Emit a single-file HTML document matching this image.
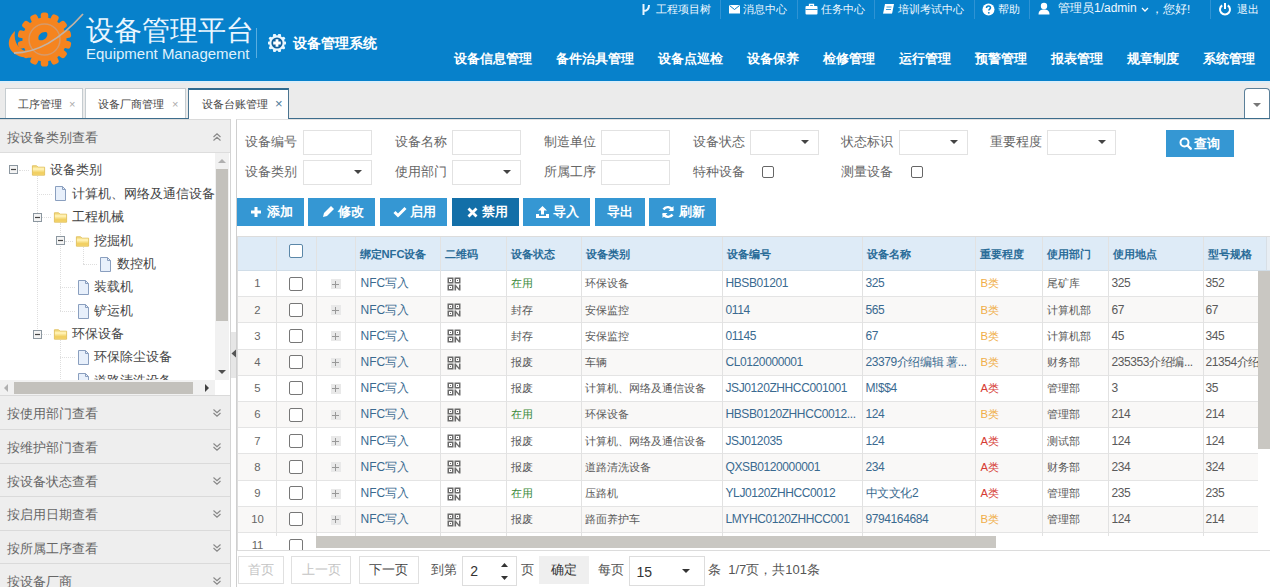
<!DOCTYPE html>
<html><head><meta charset="utf-8">
<style>
*{box-sizing:border-box;margin:0;padding:0}
html,body{width:1270px;height:587px;overflow:hidden;background:#fff;font-family:"Liberation Sans",sans-serif;color:#333;position:relative}
.abs{position:absolute}
#hdr{position:absolute;left:0;top:0;width:1270px;height:81px;background:#0781cb}
.logo-t{position:absolute;left:86px;top:14px;font-size:28px;color:#eaf6ff;white-space:nowrap;line-height:34px}
.logo-e{position:absolute;left:86px;top:45px;font-size:15px;color:#dff1fd;white-space:nowrap;line-height:17px}
.vsep{position:absolute;left:256px;top:28px;width:1px;height:30px;background:#5aaee0}
.sys{position:absolute;left:293px;top:35px;font-size:14px;font-weight:bold;color:#fff;white-space:nowrap;line-height:16px}
.tl{position:absolute;top:2px;font-size:11px;color:#eef8ff;white-space:nowrap;line-height:14px}
.tsep{position:absolute;top:0;width:1px;height:19px;background:#2f93d4}
.nav{position:absolute;top:51px;font-size:13px;font-weight:bold;color:#fff;white-space:nowrap;line-height:16px}
#tabs{position:absolute;left:0;top:81px;width:1270px;height:38px;background:#ebebeb;border-top:2px solid #dcedf8}
#tabs .line{position:absolute;left:0;top:35px;width:1270px;height:1px;background:#3d6d8c;z-index:1}
.tab{position:absolute;top:5px;height:30px;background:#fff;border:1px solid #c5ccd0;border-bottom:none;font-size:11px;color:#444;line-height:28px;white-space:nowrap}
.tab .x{position:absolute;font-size:11px;color:#aaa}
.tab.act{border:1px solid #4a7490;border-top:2px solid #2f6a90;border-bottom:none;height:31px;z-index:2}
.acc{position:absolute;left:0;width:230px;height:34px;background:#eeeeee;border-top:1px solid #dadada;font-size:13px;color:#666;line-height:35px;padding-left:7px;white-space:nowrap}
.chev{position:absolute;left:212px;top:12px;opacity:0.85}
.tt{position:absolute;font-size:13px;color:#444;white-space:nowrap;line-height:16px}
.lbl{position:absolute;font-size:13px;color:#666;white-space:nowrap;line-height:16px}
.inp{position:absolute;width:69px;height:25px;border:1px solid #e2e2e2;background:#fff}
.car{position:absolute;width:0;height:0;border-left:4px solid transparent;border-right:4px solid transparent;border-top:4px solid #444}
.cb{position:absolute;width:12px;height:12px;border:1.3px solid #666;border-radius:2px;background:#fff}
.btn{position:absolute;background:#3597d3;color:#fff;font-size:13px;font-weight:bold;white-space:nowrap}
.th{position:absolute;font-size:11.2px;font-weight:bold;color:#2a6c98;white-space:nowrap;line-height:16px}
.td{position:absolute;font-size:11.3px;color:#5a5a5a;white-space:nowrap;line-height:16px}
.td.num{text-align:center;color:#666}
.td.lnk{color:#3a6a90}
.nm{letter-spacing:-0.4px;font-size:12px;margin-left:-1.5px}
.td.lnk{font-size:12px}
.cbh{position:absolute;width:14px;height:14px;border:1.6px solid #5b87a8;border-radius:2px;background:#fff}
.cbr{position:absolute;width:14px;height:14px;border:1.6px solid #777;border-radius:2px;background:#fff}
.plus{position:absolute;width:10px;height:10px;background:#e9e9e9}
.plus:before{content:"";position:absolute;left:4.5px;top:1.5px;width:1px;height:7px;background:#999}
.plus:after{content:"";position:absolute;left:1.5px;top:4.5px;width:7px;height:1px;background:#999}
.pb{position:absolute;height:28px;border:1px solid #e0e0e0;font-size:13px;line-height:26px;text-align:center;white-space:nowrap}
.tl1{width:0;border-left:1px dotted #dedede}
.th1{height:0;border-top:1px dotted #dedede}
</style></head><body>
<div id="hdr">
  <svg class="abs" style="left:0;top:0" width="90" height="80" viewBox="0 0 90 80">
<g fill="#f5841f">
<circle cx="44.5" cy="39.5" r="22"/>
<rect x="40.75" y="12.50" width="7.5" height="9" rx="2.8" transform="rotate(0.0 44.50 39.50)"/><rect x="40.75" y="12.50" width="7.5" height="9" rx="2.8" transform="rotate(25.7 44.50 39.50)"/><rect x="40.75" y="12.50" width="7.5" height="9" rx="2.8" transform="rotate(51.4 44.50 39.50)"/><rect x="40.75" y="12.50" width="7.5" height="9" rx="2.8" transform="rotate(77.1 44.50 39.50)"/><rect x="40.75" y="12.50" width="7.5" height="9" rx="2.8" transform="rotate(102.9 44.50 39.50)"/><rect x="40.75" y="12.50" width="7.5" height="9" rx="2.8" transform="rotate(128.6 44.50 39.50)"/><rect x="40.75" y="12.50" width="7.5" height="9" rx="2.8" transform="rotate(154.3 44.50 39.50)"/><rect x="40.75" y="12.50" width="7.5" height="9" rx="2.8" transform="rotate(180.0 44.50 39.50)"/><rect x="40.75" y="12.50" width="7.5" height="9" rx="2.8" transform="rotate(205.7 44.50 39.50)"/><rect x="40.75" y="12.50" width="7.5" height="9" rx="2.8" transform="rotate(231.4 44.50 39.50)"/><rect x="40.75" y="12.50" width="7.5" height="9" rx="2.8" transform="rotate(257.1 44.50 39.50)"/><rect x="40.75" y="12.50" width="7.5" height="9" rx="2.8" transform="rotate(282.9 44.50 39.50)"/><rect x="40.75" y="12.50" width="7.5" height="9" rx="2.8" transform="rotate(308.6 44.50 39.50)"/><rect x="40.75" y="12.50" width="7.5" height="9" rx="2.8" transform="rotate(334.3 44.50 39.50)"/>
<path d="M15 31 C5 40 7 53 22 57 C31 59 39 57 45 54 C34 54 22 52 18 46 C15 42 14 37 15 31z"/>
</g>
<circle cx="44.5" cy="39.5" r="15.5" fill="none" stroke="#d69a6a" stroke-width="1.4"/>
<path d="M38.5 39.5 C37.5 35 41.5 31.5 46 32 C48.5 33 47.5 37.5 44 39.5 C42 40.5 40 40.8 38.5 39.5z" fill="#0781cb"/>
<path d="M14 53 C34 53 58 42 83 14" fill="none" stroke="#c2b3a6" stroke-width="1.8"/>
</svg>
  <div class="logo-t">设备管理平台</div>
  <div class="logo-e">Equipment Management</div>
  <div class="vsep"></div>
  <svg class="abs" style="left:268px;top:33.5px" width="18" height="18" viewBox="0 0 18 18"><g fill="#e8f7ff"><circle cx="9" cy="9" r="7.8"/><circle cx="17.00" cy="9.00" r="1.6"/><circle cx="15.47" cy="13.70" r="1.6"/><circle cx="11.47" cy="16.61" r="1.6"/><circle cx="6.53" cy="16.61" r="1.6"/><circle cx="2.53" cy="13.70" r="1.6"/><circle cx="1.00" cy="9.00" r="1.6"/><circle cx="2.53" cy="4.30" r="1.6"/><circle cx="6.53" cy="1.39" r="1.6"/><circle cx="11.47" cy="1.39" r="1.6"/><circle cx="15.47" cy="4.30" r="1.6"/></g><circle cx="9" cy="9" r="5.6" fill="#0d5f9c"/><path d="M9 5.2v7.6M5.2 9h7.6" stroke="#fff" stroke-width="2.8"/></svg>
  <div class="sys">设备管理系统</div>


  <svg class="abs" style="left:641px;top:3px" width="10" height="13" viewBox="0 0 10 13"><path d="M2.5 1v11M2.5 8C6 8 8 6 8 2" fill="none" stroke="#eaf6ff" stroke-width="2"/></svg>
  <svg class="abs" style="left:729px;top:4px" width="11" height="10" viewBox="0 0 11 10"><rect x="0" y="1" width="11" height="8.5" fill="#fff"/><path d="M0.5 1.5L5.5 5.5L10.5 1.5" fill="none" stroke="#0781cb" stroke-width="1"/></svg>
  <svg class="abs" style="left:805px;top:3px" width="13" height="12" viewBox="0 0 13 12"><path d="M4.5 3V1.5h4V3" fill="none" stroke="#fff" stroke-width="1.3"/><rect x="0.5" y="3" width="12" height="8.5" rx="1" fill="#fff"/><path d="M0.5 6.5h12" stroke="#0781cb" stroke-width="0.8"/></svg>
  <svg class="abs" style="left:882px;top:3px" width="13" height="13" viewBox="0 0 13 13"><path d="M3 1h9l-2 10H1z" fill="#fff"/><path d="M1 11h9l1.5-1" fill="none" stroke="#0781cb" stroke-width="0.8"/><path d="M4.5 4h5M4 6.5h5" stroke="#0781cb" stroke-width="0.8"/></svg>
  <svg class="abs" style="left:982px;top:3px" width="13" height="13" viewBox="0 0 13 13"><circle cx="6.5" cy="6.5" r="6" fill="#fff"/><path d="M4.5 5C4.5 3.5 5.5 3 6.5 3S8.5 3.6 8.5 4.8C8.5 6 6.8 6.2 6.8 7.6" fill="none" stroke="#0781cb" stroke-width="1.5"/><circle cx="6.8" cy="9.8" r="0.9" fill="#0781cb"/></svg>
  <svg class="abs" style="left:1038px;top:2px" width="12" height="13" viewBox="0 0 12 13"><circle cx="6" cy="4" r="3.2" fill="#fff"/><path d="M0.5 12.5C0.5 8.5 3 7.5 6 7.5S11.5 8.5 11.5 12.5z" fill="#fff"/></svg>
  <svg class="abs" style="left:1141px;top:7px" width="8" height="5" viewBox="0 0 8 5"><path d="M1 1l3 3 3-3" fill="none" stroke="#fff" stroke-width="1.3"/></svg>
  <svg class="abs" style="left:1218px;top:2px" width="14" height="14" viewBox="0 0 14 14"><path d="M4.2 3.3A5 5 0 1 0 9.8 3.3" fill="none" stroke="#fff" stroke-width="2"/><path d="M7 1v6" stroke="#fff" stroke-width="2"/></svg>
  <div class="tl" style="left:656px">工程项目树</div>
  <div class="tsep" style="left:720px"></div>
  <div class="tl" style="left:743px">消息中心</div>
  <div class="tsep" style="left:797px"></div>
  <div class="tl" style="left:821px">任务中心</div>
  <div class="tsep" style="left:874px"></div>
  <div class="tl" style="left:898px">培训考试中心</div>
  <div class="tsep" style="left:974px"></div>
  <div class="tl" style="left:998px">帮助</div>
  <div class="tsep" style="left:1029px"></div>
  <div class="tl" style="left:1058px;font-size:12px;top:1px">管理员1/admin</div>
  <div class="tl" style="left:1151px;font-size:11.5px">，您好!</div>
  <div class="tsep" style="left:1210px"></div>
  <div class="tl" style="left:1237px">退出</div>

  <div class="nav" style="left:454px">设备信息管理</div>
  <div class="nav" style="left:556px">备件治具管理</div>
  <div class="nav" style="left:658px">设备点巡检</div>
  <div class="nav" style="left:747px">设备保养</div>
  <div class="nav" style="left:823px">检修管理</div>
  <div class="nav" style="left:899px">运行管理</div>
  <div class="nav" style="left:975px">预警管理</div>
  <div class="nav" style="left:1051px">报表管理</div>
  <div class="nav" style="left:1127px">规章制度</div>
  <div class="nav" style="left:1203px">系统管理</div>
</div>

<div id="tabs">
  <div class="line"></div>
  <div class="tab" style="left:5px;width:78px"><span class="abs" style="left:12px;top:1px">工序管理</span><span class="x" style="left:63px;top:1px">×</span></div>
  <div class="tab" style="left:85px;width:101px"><span class="abs" style="left:12px;top:1px">设备厂商管理</span><span class="x" style="left:86px;top:1px">×</span></div>
  <div class="tab act" style="left:188px;width:101px"><span class="abs" style="left:13px;top:0">设备台账管理</span><span class="x" style="left:86px;top:0;color:#4d7a99;font-size:13px">×</span></div>
  <div class="abs" style="left:1244px;top:5px;width:26px;height:31px;background:#fff;border:1px solid #5a7f99;border-bottom:none;border-radius:4px 4px 0 0"><div class="car" style="left:8px;top:14px;border-top-color:#777"></div></div>
</div>

<div id="side" style="position:absolute;left:0;top:119px;width:231px;height:468px;background:#fff;border-right:1px solid #d4d4d4">
  <div class="acc" style="top:0;height:34px;border-bottom:1px solid #ddd">按设备类别查看<svg class="chev" width="10" height="10" viewBox="0 0 10 10"><path d="M1.5 5L5 1.8L8.5 5M1.5 8.5L5 5.3L8.5 8.5" fill="none" stroke="#777" stroke-width="1.15"/></svg></div>
  <div id="tree" style="position:absolute;left:0;top:34px;width:230px;height:242px;overflow:hidden;background:#fff">
<div class="abs tl1" style="left:37px;top:22.7px;height:153.6px"></div>
<div class="abs tl1" style="left:60px;top:70.4px;height:87.6px"></div>
<div class="abs tl1" style="left:83px;top:93.8px;height:17.6px"></div>
<div class="abs tl1" style="left:60px;top:187.3px;height:54.7px"></div>
<div class="abs th1" style="left:19px;top:16.7px;width:10px"></div>
<div class="abs th1" style="left:37px;top:40.6px;width:15px"></div>
<div class="abs th1" style="left:42px;top:64.4px;width:9px"></div>
<div class="abs th1" style="left:42px;top:181.3px;width:9px"></div>
<div class="abs th1" style="left:65px;top:87.8px;width:8px"></div>
<div class="abs th1" style="left:83px;top:111.4px;width:14px"></div>
<div class="abs th1" style="left:60px;top:134.4px;width:15px"></div>
<div class="abs th1" style="left:60px;top:158.0px;width:15px"></div>
<div class="abs th1" style="left:60px;top:204.0px;width:15px"></div>
<div class="abs th1" style="left:60px;top:227.5px;width:15px"></div>
<svg class="abs" style="left:9px;top:12.2px" width="9" height="9" viewBox="0 0 9 9"><rect x="0.5" y="0.5" width="8" height="8" fill="#f4f4f4" stroke="#8c97a0"/><path d="M2 4.5h5" stroke="#444" stroke-width="1.2"/></svg>
<svg class="abs" style="left:31px;top:9.7px" width="15" height="14" viewBox="0 0 16 14"><path d="M1.5 2.5h4.5l1.5 1.5h7v8.5h-13z" fill="#f5dc80" stroke="#e0c060" stroke-width="1"/><path d="M2 4.5h12v3h-12z" fill="#fff0b0"/><path d="M2 9h12v3h-12z" fill="#f2d064"/></svg>
<div class="tt" style="left:50px;top:8.7px">设备类别</div>
<svg class="abs" style="left:54px;top:33.1px" width="13" height="15" viewBox="0 0 13 15"><path d="M1.5 0.5h7l3 3v11h-10z" fill="#e8f0fb" stroke="#8a9fbf" stroke-width="1"/><path d="M8.5 0.5v3h3" fill="none" stroke="#8a9fbf" stroke-width="1"/></svg>
<div class="tt" style="left:72px;top:32.6px">计算机、网络及通信设备</div>
<svg class="abs" style="left:33px;top:59.9px" width="9" height="9" viewBox="0 0 9 9"><rect x="0.5" y="0.5" width="8" height="8" fill="#f4f4f4" stroke="#8c97a0"/><path d="M2 4.5h5" stroke="#444" stroke-width="1.2"/></svg>
<svg class="abs" style="left:53px;top:57.4px" width="15" height="14" viewBox="0 0 16 14"><path d="M1.5 2.5h4.5l1.5 1.5h7v8.5h-13z" fill="#f5dc80" stroke="#e0c060" stroke-width="1"/><path d="M2 4.5h12v3h-12z" fill="#fff0b0"/><path d="M2 9h12v3h-12z" fill="#f2d064"/></svg>
<div class="tt" style="left:72px;top:56.4px">工程机械</div>
<svg class="abs" style="left:56px;top:83.3px" width="9" height="9" viewBox="0 0 9 9"><rect x="0.5" y="0.5" width="8" height="8" fill="#f4f4f4" stroke="#8c97a0"/><path d="M2 4.5h5" stroke="#444" stroke-width="1.2"/></svg>
<svg class="abs" style="left:75px;top:80.8px" width="15" height="14" viewBox="0 0 16 14"><path d="M1.5 2.5h4.5l1.5 1.5h7v8.5h-13z" fill="#f5dc80" stroke="#e0c060" stroke-width="1"/><path d="M2 4.5h12v3h-12z" fill="#fff0b0"/><path d="M2 9h12v3h-12z" fill="#f2d064"/></svg>
<div class="tt" style="left:94px;top:79.8px">挖掘机</div>
<svg class="abs" style="left:99px;top:103.9px" width="13" height="15" viewBox="0 0 13 15"><path d="M1.5 0.5h7l3 3v11h-10z" fill="#e8f0fb" stroke="#8a9fbf" stroke-width="1"/><path d="M8.5 0.5v3h3" fill="none" stroke="#8a9fbf" stroke-width="1"/></svg>
<div class="tt" style="left:117px;top:103.4px">数控机</div>
<svg class="abs" style="left:77px;top:126.9px" width="13" height="15" viewBox="0 0 13 15"><path d="M1.5 0.5h7l3 3v11h-10z" fill="#e8f0fb" stroke="#8a9fbf" stroke-width="1"/><path d="M8.5 0.5v3h3" fill="none" stroke="#8a9fbf" stroke-width="1"/></svg>
<div class="tt" style="left:94px;top:126.4px">装载机</div>
<svg class="abs" style="left:77px;top:150.5px" width="13" height="15" viewBox="0 0 13 15"><path d="M1.5 0.5h7l3 3v11h-10z" fill="#e8f0fb" stroke="#8a9fbf" stroke-width="1"/><path d="M8.5 0.5v3h3" fill="none" stroke="#8a9fbf" stroke-width="1"/></svg>
<div class="tt" style="left:94px;top:150.0px">铲运机</div>
<svg class="abs" style="left:33px;top:176.8px" width="9" height="9" viewBox="0 0 9 9"><rect x="0.5" y="0.5" width="8" height="8" fill="#f4f4f4" stroke="#8c97a0"/><path d="M2 4.5h5" stroke="#444" stroke-width="1.2"/></svg>
<svg class="abs" style="left:53px;top:174.3px" width="15" height="14" viewBox="0 0 16 14"><path d="M1.5 2.5h4.5l1.5 1.5h7v8.5h-13z" fill="#f5dc80" stroke="#e0c060" stroke-width="1"/><path d="M2 4.5h12v3h-12z" fill="#fff0b0"/><path d="M2 9h12v3h-12z" fill="#f2d064"/></svg>
<div class="tt" style="left:72px;top:173.3px">环保设备</div>
<svg class="abs" style="left:77px;top:196.5px" width="13" height="15" viewBox="0 0 13 15"><path d="M1.5 0.5h7l3 3v11h-10z" fill="#e8f0fb" stroke="#8a9fbf" stroke-width="1"/><path d="M8.5 0.5v3h3" fill="none" stroke="#8a9fbf" stroke-width="1"/></svg>
<div class="tt" style="left:94px;top:196.0px">环保除尘设备</div>
<svg class="abs" style="left:77px;top:220.0px" width="13" height="15" viewBox="0 0 13 15"><path d="M1.5 0.5h7l3 3v11h-10z" fill="#e8f0fb" stroke="#8a9fbf" stroke-width="1"/><path d="M8.5 0.5v3h3" fill="none" stroke="#8a9fbf" stroke-width="1"/></svg>
<div class="tt" style="left:94px;top:219.5px">道路清洗设备</div>
<div class="abs" style="left:215px;top:0;width:14px;height:227px;background:#f1f1f1"></div>
<div class="abs" style="left:216px;top:16px;width:12px;height:152px;background:#c3c1bc"></div>
<svg class="abs" style="left:217px;top:5px" width="10" height="6"><path d="M1 5L5 1L9 5z" fill="#b0b0b0"/></svg>
<svg class="abs" style="left:217px;top:216px" width="10" height="6"><path d="M1 1L5 5L9 1z" fill="#505050"/></svg>
<div class="abs" style="left:0;top:227px;width:215px;height:15px;background:#f1f1f1"></div>
<div class="abs" style="left:14px;top:229px;width:179px;height:12px;background:#c3c1bc"></div>
<svg class="abs" style="left:3px;top:230px" width="6" height="10"><path d="M5 1L1 5L5 9z" fill="#b0b0b0"/></svg>
<svg class="abs" style="left:204px;top:230px" width="6" height="10"><path d="M1 1L5 5L1 9z" fill="#404040"/></svg>
  </div>
  <div class="acc" style="top:276px">按使用部门查看<svg class="chev" width="10" height="10" viewBox="0 0 10 10"><path d="M1.5 1.5L5 4.7L8.5 1.5M1.5 5L5 8.2L8.5 5" fill="none" stroke="#777" stroke-width="1.15"/></svg></div>
  <div class="acc" style="top:310px">按维护部门查看<svg class="chev" width="10" height="10" viewBox="0 0 10 10"><path d="M1.5 1.5L5 4.7L8.5 1.5M1.5 5L5 8.2L8.5 5" fill="none" stroke="#777" stroke-width="1.15"/></svg></div>
  <div class="acc" style="top:344px">按设备状态查看<svg class="chev" width="10" height="10" viewBox="0 0 10 10"><path d="M1.5 1.5L5 4.7L8.5 1.5M1.5 5L5 8.2L8.5 5" fill="none" stroke="#777" stroke-width="1.15"/></svg></div>
  <div class="acc" style="top:377px">按启用日期查看<svg class="chev" width="10" height="10" viewBox="0 0 10 10"><path d="M1.5 1.5L5 4.7L8.5 1.5M1.5 5L5 8.2L8.5 5" fill="none" stroke="#777" stroke-width="1.15"/></svg></div>
  <div class="acc" style="top:411px">按所属工序查看<svg class="chev" width="10" height="10" viewBox="0 0 10 10"><path d="M1.5 1.5L5 4.7L8.5 1.5M1.5 5L5 8.2L8.5 5" fill="none" stroke="#777" stroke-width="1.15"/></svg></div>
  <div class="acc" style="top:444px">按设备厂商<svg class="chev" width="10" height="10" viewBox="0 0 10 10"><path d="M1.5 1.5L5 4.7L8.5 1.5M1.5 5L5 8.2L8.5 5" fill="none" stroke="#777" stroke-width="1.15"/></svg></div>
</div>

<div class="abs" style="left:231px;top:332px;width:5px;height:46px;background:#e6e6e6"></div><svg class="abs" style="left:231px;top:349px" width="5" height="9" viewBox="0 0 5 9"><path d="M5 0.5L0.5 4.5L5 8.5z" fill="#555"/></svg>
<div id="main" style="position:absolute;left:236px;top:119px;width:1034px;height:468px;background:#fff;border-left:1px solid #cfcfcf;border-top:1px solid #e3e3e3">
<div class="lbl" style="left:8.0px;top:13.7px">设备编号</div>
<div class="inp" style="left:66.0px;top:9.5px"></div>
<div class="lbl" style="left:158.0px;top:13.7px">设备名称</div>
<div class="inp" style="left:214.5px;top:9.5px"></div>
<div class="lbl" style="left:307.0px;top:13.7px">制造单位</div>
<div class="inp" style="left:363.5px;top:9.5px"></div>
<div class="lbl" style="left:455.5px;top:13.7px">设备状态</div>
<div class="inp" style="left:512.5px;top:9.5px"></div>
<div class="car" style="left:563.5px;top:20.0px"></div>
<div class="lbl" style="left:604.0px;top:13.7px">状态标识</div>
<div class="inp" style="left:661.5px;top:9.5px"></div>
<div class="car" style="left:712.5px;top:20.0px"></div>
<div class="lbl" style="left:752.5px;top:13.7px">重要程度</div>
<div class="inp" style="left:810.0px;top:9.5px"></div>
<div class="car" style="left:861.0px;top:20.0px"></div>
<div class="lbl" style="left:8.0px;top:43.5px">设备类别</div>
<div class="inp" style="left:66.0px;top:39.5px"></div>
<div class="car" style="left:117.0px;top:49.5px"></div>
<div class="lbl" style="left:158.0px;top:43.5px">使用部门</div>
<div class="inp" style="left:214.5px;top:39.5px"></div>
<div class="car" style="left:265.5px;top:49.5px"></div>
<div class="lbl" style="left:307.0px;top:43.5px">所属工序</div>
<div class="inp" style="left:363.5px;top:39.5px"></div>
<div class="lbl" style="left:455.5px;top:43.5px">特种设备</div>
<div class="cb" style="left:525.0px;top:46.0px"></div>
<div class="lbl" style="left:604.0px;top:43.5px">测量设备</div>
<div class="cb" style="left:674.0px;top:46.0px"></div>
<div class="btn" style="left:929.0px;top:9.7px;width:68px;height:27px;line-height:27px"><svg class="abs" style="left:13px;top:7px" width="13" height="13" viewBox="0 0 13 13"><circle cx="5.5" cy="5.5" r="4" fill="none" stroke="#fff" stroke-width="2"/><path d="M8.5 8.5l3.2 3.2" stroke="#fff" stroke-width="2.4" stroke-linecap="round"/></svg><span class="abs" style="left:28px;top:0">查询</span></div>
<div class="btn" style="left:0.0px;top:78.4px;width:67px;height:28px;line-height:28px;background:#3597d3"><svg class="abs" style="left:13px;top:8px" width="12" height="12" viewBox="0 0 12 12"><path d="M6 1v10M1 6h10" stroke="#fff" stroke-width="3"/></svg><span class="abs" style="left:30px;top:0">添加</span></div>
<div class="btn" style="left:71.0px;top:78.4px;width:67px;height:28px;line-height:28px;background:#3597d3"><svg class="abs" style="left:14px;top:7px" width="13" height="13" viewBox="0 0 13 13"><path d="M1 12l1-4 7-7 3 3-7 7z" fill="#fff"/></svg><span class="abs" style="left:30px;top:0">修改</span></div>
<div class="btn" style="left:143.0px;top:78.4px;width:67px;height:28px;line-height:28px;background:#3597d3"><svg class="abs" style="left:13px;top:8px" width="14" height="12" viewBox="0 0 14 12"><path d="M1.5 6l3.5 3.5 7.5-7.5" fill="none" stroke="#fff" stroke-width="3"/></svg><span class="abs" style="left:30px;top:0">启用</span></div>
<div class="btn" style="left:214.5px;top:78.4px;width:67px;height:28px;line-height:28px;background:#136fa8"><svg class="abs" style="left:15px;top:9px" width="11" height="11" viewBox="0 0 11 11"><path d="M1.5 1.5l8 8M9.5 1.5l-8 8" stroke="#fff" stroke-width="2.8"/></svg><span class="abs" style="left:30px;top:0">禁用</span></div>
<div class="btn" style="left:286.0px;top:78.4px;width:67px;height:28px;line-height:28px;background:#3597d3"><svg class="abs" style="left:12px;top:7px" width="15" height="14" viewBox="0 0 15 14"><path d="M7.5 1l4.5 4.5h-3v4h-3v-4h-3z" fill="#fff"/><path d="M1 9h3v2h7v-2h3v4h-13z" fill="#fff"/></svg><span class="abs" style="left:30px;top:0">导入</span></div>
<div class="btn" style="left:358.0px;top:78.4px;width:50px;height:28px;line-height:28px;background:#3597d3"><span class="abs" style="left:12px;top:0">导出</span></div>
<div class="btn" style="left:412.3px;top:78.4px;width:67px;height:28px;line-height:28px;background:#3597d3"><svg class="abs" style="left:12px;top:7px" width="14" height="14" viewBox="0 0 14 14"><path d="M11.5 5.5A5 5 0 0 0 2.5 4.5" fill="none" stroke="#fff" stroke-width="2.4"/><path d="M2.5 8.5A5 5 0 0 0 11.5 9.5" fill="none" stroke="#fff" stroke-width="2.4"/><path d="M12.5 1v5h-5z" fill="#fff"/><path d="M1.5 13v-5h5z" fill="#fff"/></svg><span class="abs" style="left:30px;top:0">刷新</span></div>
<div id="tbl" style="position:absolute;left:0;top:116.3px;width:1033px;height:314.7px;border:1px solid #dcdcdc;border-right:none;overflow:hidden;background:#fff">
<div class="abs" style="left:0;top:0;width:1040px;height:33.7px;background:#deebf7;border-bottom:1px solid #d0dde8"></div>
<div class="cbh" style="left:51.0px;top:6.7px"></div>
<div class="th" style="left:121.5px;top:8.9px">绑定NFC设备</div>
<div class="th" style="left:206.5px;top:8.9px">二维码</div>
<div class="th" style="left:273.0px;top:8.9px">设备状态</div>
<div class="th" style="left:348.0px;top:8.9px">设备类别</div>
<div class="th" style="left:488.5px;top:8.9px">设备编号</div>
<div class="th" style="left:628.5px;top:8.9px">设备名称</div>
<div class="th" style="left:742.0px;top:8.9px">重要程度</div>
<div class="th" style="left:809.0px;top:8.9px">使用部门</div>
<div class="th" style="left:874.5px;top:8.9px">使用地点</div>
<div class="th" style="left:970.0px;top:8.9px">型号规格</div>
<div class="abs" style="left:0;top:33.7px;width:1021px;height:26.2px;background:#fff;border-bottom:1px solid #e4e4e4"></div>
<div class="td num" style="left:0;width:39px;top:38.1px">1</div>
<div class="cbr" style="left:51.0px;top:39.3px"></div>
<div class="plus" style="left:92.5px;top:41.8px"></div>
<div class="td lnk" style="left:122.5px;top:38.1px">NFC写入</div>
<svg class="abs" style="left:209.0px;top:39.8px" width="14" height="14" viewBox="0 0 14 14"><g fill="none" stroke="#6a6a6a" stroke-width="1.5"><rect x="1.25" y="1.25" width="4.5" height="4.5"/><rect x="8.25" y="1.25" width="4.5" height="4.5"/><rect x="1.25" y="8.25" width="4.5" height="4.5"/></g><g fill="#6a6a6a"><rect x="3" y="3" width="1" height="1"/><rect x="10" y="3" width="1" height="1"/><rect x="3" y="10" width="1" height="1"/><path d="M7.5 7.5h1.6v6h-1.6zM9 8l3 3.5v-4h1.5v6h-1.5l-3-3.5z"/></g></svg>
<div class="td" style="left:273.0px;top:38.1px;color:#3b8a3b">在用</div>
<div class="td" style="left:347.0px;top:38.1px">环保设备</div>
<div class="td lnk nm" style="left:489.0px;top:38.1px">HBSB01201</div>
<div class="td lnk nm" style="left:629.0px;top:38.1px">325</div>
<div class="td" style="left:742.5px;top:38.1px;color:#f0ae48">B类</div>
<div class="td" style="left:808.5px;top:38.1px">尾矿库</div>
<div class="td nm" style="left:875.0px;top:38.1px">325</div>
<div class="td nm" style="left:969.0px;top:38.1px">352</div>
<div class="abs" style="left:0;top:59.9px;width:1021px;height:26.2px;background:#f9f8f7;border-bottom:1px solid #e4e4e4"></div>
<div class="td num" style="left:0;width:39px;top:64.3px">2</div>
<div class="cbr" style="left:51.0px;top:65.5px"></div>
<div class="plus" style="left:92.5px;top:68.0px"></div>
<div class="td lnk" style="left:122.5px;top:64.3px">NFC写入</div>
<svg class="abs" style="left:209.0px;top:66.0px" width="14" height="14" viewBox="0 0 14 14"><g fill="none" stroke="#6a6a6a" stroke-width="1.5"><rect x="1.25" y="1.25" width="4.5" height="4.5"/><rect x="8.25" y="1.25" width="4.5" height="4.5"/><rect x="1.25" y="8.25" width="4.5" height="4.5"/></g><g fill="#6a6a6a"><rect x="3" y="3" width="1" height="1"/><rect x="10" y="3" width="1" height="1"/><rect x="3" y="10" width="1" height="1"/><path d="M7.5 7.5h1.6v6h-1.6zM9 8l3 3.5v-4h1.5v6h-1.5l-3-3.5z"/></g></svg>
<div class="td" style="left:273.0px;top:64.3px;color:#555">封存</div>
<div class="td" style="left:347.0px;top:64.3px">安保监控</div>
<div class="td lnk nm" style="left:489.0px;top:64.3px">0114</div>
<div class="td lnk nm" style="left:629.0px;top:64.3px">565</div>
<div class="td" style="left:742.5px;top:64.3px;color:#f0ae48">B类</div>
<div class="td" style="left:808.5px;top:64.3px">计算机部</div>
<div class="td nm" style="left:875.0px;top:64.3px">67</div>
<div class="td nm" style="left:969.0px;top:64.3px">67</div>
<div class="abs" style="left:0;top:86.1px;width:1021px;height:26.2px;background:#fff;border-bottom:1px solid #e4e4e4"></div>
<div class="td num" style="left:0;width:39px;top:90.5px">3</div>
<div class="cbr" style="left:51.0px;top:91.7px"></div>
<div class="plus" style="left:92.5px;top:94.2px"></div>
<div class="td lnk" style="left:122.5px;top:90.5px">NFC写入</div>
<svg class="abs" style="left:209.0px;top:92.2px" width="14" height="14" viewBox="0 0 14 14"><g fill="none" stroke="#6a6a6a" stroke-width="1.5"><rect x="1.25" y="1.25" width="4.5" height="4.5"/><rect x="8.25" y="1.25" width="4.5" height="4.5"/><rect x="1.25" y="8.25" width="4.5" height="4.5"/></g><g fill="#6a6a6a"><rect x="3" y="3" width="1" height="1"/><rect x="10" y="3" width="1" height="1"/><rect x="3" y="10" width="1" height="1"/><path d="M7.5 7.5h1.6v6h-1.6zM9 8l3 3.5v-4h1.5v6h-1.5l-3-3.5z"/></g></svg>
<div class="td" style="left:273.0px;top:90.5px;color:#555">封存</div>
<div class="td" style="left:347.0px;top:90.5px">安保监控</div>
<div class="td lnk nm" style="left:489.0px;top:90.5px">01145</div>
<div class="td lnk nm" style="left:629.0px;top:90.5px">67</div>
<div class="td" style="left:742.5px;top:90.5px;color:#f0ae48">B类</div>
<div class="td" style="left:808.5px;top:90.5px">计算机部</div>
<div class="td nm" style="left:875.0px;top:90.5px">45</div>
<div class="td nm" style="left:969.0px;top:90.5px">345</div>
<div class="abs" style="left:0;top:112.3px;width:1021px;height:26.2px;background:#f9f8f7;border-bottom:1px solid #e4e4e4"></div>
<div class="td num" style="left:0;width:39px;top:116.7px">4</div>
<div class="cbr" style="left:51.0px;top:117.9px"></div>
<div class="plus" style="left:92.5px;top:120.4px"></div>
<div class="td lnk" style="left:122.5px;top:116.7px">NFC写入</div>
<svg class="abs" style="left:209.0px;top:118.4px" width="14" height="14" viewBox="0 0 14 14"><g fill="none" stroke="#6a6a6a" stroke-width="1.5"><rect x="1.25" y="1.25" width="4.5" height="4.5"/><rect x="8.25" y="1.25" width="4.5" height="4.5"/><rect x="1.25" y="8.25" width="4.5" height="4.5"/></g><g fill="#6a6a6a"><rect x="3" y="3" width="1" height="1"/><rect x="10" y="3" width="1" height="1"/><rect x="3" y="10" width="1" height="1"/><path d="M7.5 7.5h1.6v6h-1.6zM9 8l3 3.5v-4h1.5v6h-1.5l-3-3.5z"/></g></svg>
<div class="td" style="left:273.0px;top:116.7px;color:#555">报废</div>
<div class="td" style="left:347.0px;top:116.7px">车辆</div>
<div class="td lnk nm" style="left:489.0px;top:116.7px">CL0120000001</div>
<div class="td lnk nm" style="left:629.0px;top:116.7px">23379介绍编辑 薯...</div>
<div class="td" style="left:742.5px;top:116.7px;color:#f0ae48">B类</div>
<div class="td" style="left:808.5px;top:116.7px">财务部</div>
<div class="td nm" style="left:875.0px;top:116.7px">235353介绍编...</div>
<div class="td nm" style="left:969.0px;top:116.7px">21354介绍</div>
<div class="abs" style="left:0;top:138.5px;width:1021px;height:26.2px;background:#fff;border-bottom:1px solid #e4e4e4"></div>
<div class="td num" style="left:0;width:39px;top:142.9px">5</div>
<div class="cbr" style="left:51.0px;top:144.1px"></div>
<div class="plus" style="left:92.5px;top:146.6px"></div>
<div class="td lnk" style="left:122.5px;top:142.9px">NFC写入</div>
<svg class="abs" style="left:209.0px;top:144.6px" width="14" height="14" viewBox="0 0 14 14"><g fill="none" stroke="#6a6a6a" stroke-width="1.5"><rect x="1.25" y="1.25" width="4.5" height="4.5"/><rect x="8.25" y="1.25" width="4.5" height="4.5"/><rect x="1.25" y="8.25" width="4.5" height="4.5"/></g><g fill="#6a6a6a"><rect x="3" y="3" width="1" height="1"/><rect x="10" y="3" width="1" height="1"/><rect x="3" y="10" width="1" height="1"/><path d="M7.5 7.5h1.6v6h-1.6zM9 8l3 3.5v-4h1.5v6h-1.5l-3-3.5z"/></g></svg>
<div class="td" style="left:273.0px;top:142.9px;color:#555">报废</div>
<div class="td" style="left:347.0px;top:142.9px">计算机、网络及通信设备</div>
<div class="td lnk nm" style="left:489.0px;top:142.9px">JSJ0120ZHHCC001001</div>
<div class="td lnk nm" style="left:629.0px;top:142.9px">M!$$4</div>
<div class="td" style="left:742.5px;top:142.9px;color:#d63c34">A类</div>
<div class="td" style="left:808.5px;top:142.9px">管理部</div>
<div class="td nm" style="left:875.0px;top:142.9px">3</div>
<div class="td nm" style="left:969.0px;top:142.9px">35</div>
<div class="abs" style="left:0;top:164.7px;width:1021px;height:26.2px;background:#f9f8f7;border-bottom:1px solid #e4e4e4"></div>
<div class="td num" style="left:0;width:39px;top:169.1px">6</div>
<div class="cbr" style="left:51.0px;top:170.3px"></div>
<div class="plus" style="left:92.5px;top:172.8px"></div>
<div class="td lnk" style="left:122.5px;top:169.1px">NFC写入</div>
<svg class="abs" style="left:209.0px;top:170.8px" width="14" height="14" viewBox="0 0 14 14"><g fill="none" stroke="#6a6a6a" stroke-width="1.5"><rect x="1.25" y="1.25" width="4.5" height="4.5"/><rect x="8.25" y="1.25" width="4.5" height="4.5"/><rect x="1.25" y="8.25" width="4.5" height="4.5"/></g><g fill="#6a6a6a"><rect x="3" y="3" width="1" height="1"/><rect x="10" y="3" width="1" height="1"/><rect x="3" y="10" width="1" height="1"/><path d="M7.5 7.5h1.6v6h-1.6zM9 8l3 3.5v-4h1.5v6h-1.5l-3-3.5z"/></g></svg>
<div class="td" style="left:273.0px;top:169.1px;color:#3b8a3b">在用</div>
<div class="td" style="left:347.0px;top:169.1px">环保设备</div>
<div class="td lnk nm" style="left:489.0px;top:169.1px">HBSB0120ZHHCC0012...</div>
<div class="td lnk nm" style="left:629.0px;top:169.1px">124</div>
<div class="td" style="left:742.5px;top:169.1px;color:#f0ae48">B类</div>
<div class="td" style="left:808.5px;top:169.1px">管理部</div>
<div class="td nm" style="left:875.0px;top:169.1px">214</div>
<div class="td nm" style="left:969.0px;top:169.1px">214</div>
<div class="abs" style="left:0;top:190.9px;width:1021px;height:26.2px;background:#fff;border-bottom:1px solid #e4e4e4"></div>
<div class="td num" style="left:0;width:39px;top:195.3px">7</div>
<div class="cbr" style="left:51.0px;top:196.5px"></div>
<div class="plus" style="left:92.5px;top:199.0px"></div>
<div class="td lnk" style="left:122.5px;top:195.3px">NFC写入</div>
<svg class="abs" style="left:209.0px;top:197.0px" width="14" height="14" viewBox="0 0 14 14"><g fill="none" stroke="#6a6a6a" stroke-width="1.5"><rect x="1.25" y="1.25" width="4.5" height="4.5"/><rect x="8.25" y="1.25" width="4.5" height="4.5"/><rect x="1.25" y="8.25" width="4.5" height="4.5"/></g><g fill="#6a6a6a"><rect x="3" y="3" width="1" height="1"/><rect x="10" y="3" width="1" height="1"/><rect x="3" y="10" width="1" height="1"/><path d="M7.5 7.5h1.6v6h-1.6zM9 8l3 3.5v-4h1.5v6h-1.5l-3-3.5z"/></g></svg>
<div class="td" style="left:273.0px;top:195.3px;color:#555">报废</div>
<div class="td" style="left:347.0px;top:195.3px">计算机、网络及通信设备</div>
<div class="td lnk nm" style="left:489.0px;top:195.3px">JSJ012035</div>
<div class="td lnk nm" style="left:629.0px;top:195.3px">124</div>
<div class="td" style="left:742.5px;top:195.3px;color:#d63c34">A类</div>
<div class="td" style="left:808.5px;top:195.3px">测试部</div>
<div class="td nm" style="left:875.0px;top:195.3px">124</div>
<div class="td nm" style="left:969.0px;top:195.3px">124</div>
<div class="abs" style="left:0;top:217.1px;width:1021px;height:26.2px;background:#f9f8f7;border-bottom:1px solid #e4e4e4"></div>
<div class="td num" style="left:0;width:39px;top:221.5px">8</div>
<div class="cbr" style="left:51.0px;top:222.7px"></div>
<div class="plus" style="left:92.5px;top:225.2px"></div>
<div class="td lnk" style="left:122.5px;top:221.5px">NFC写入</div>
<svg class="abs" style="left:209.0px;top:223.2px" width="14" height="14" viewBox="0 0 14 14"><g fill="none" stroke="#6a6a6a" stroke-width="1.5"><rect x="1.25" y="1.25" width="4.5" height="4.5"/><rect x="8.25" y="1.25" width="4.5" height="4.5"/><rect x="1.25" y="8.25" width="4.5" height="4.5"/></g><g fill="#6a6a6a"><rect x="3" y="3" width="1" height="1"/><rect x="10" y="3" width="1" height="1"/><rect x="3" y="10" width="1" height="1"/><path d="M7.5 7.5h1.6v6h-1.6zM9 8l3 3.5v-4h1.5v6h-1.5l-3-3.5z"/></g></svg>
<div class="td" style="left:273.0px;top:221.5px;color:#555">报废</div>
<div class="td" style="left:347.0px;top:221.5px">道路清洗设备</div>
<div class="td lnk nm" style="left:489.0px;top:221.5px">QXSB0120000001</div>
<div class="td lnk nm" style="left:629.0px;top:221.5px">234</div>
<div class="td" style="left:742.5px;top:221.5px;color:#d63c34">A类</div>
<div class="td" style="left:808.5px;top:221.5px">财务部</div>
<div class="td nm" style="left:875.0px;top:221.5px">234</div>
<div class="td nm" style="left:969.0px;top:221.5px">324</div>
<div class="abs" style="left:0;top:243.3px;width:1021px;height:26.2px;background:#fff;border-bottom:1px solid #e4e4e4"></div>
<div class="td num" style="left:0;width:39px;top:247.7px">9</div>
<div class="cbr" style="left:51.0px;top:248.9px"></div>
<div class="plus" style="left:92.5px;top:251.4px"></div>
<div class="td lnk" style="left:122.5px;top:247.7px">NFC写入</div>
<svg class="abs" style="left:209.0px;top:249.4px" width="14" height="14" viewBox="0 0 14 14"><g fill="none" stroke="#6a6a6a" stroke-width="1.5"><rect x="1.25" y="1.25" width="4.5" height="4.5"/><rect x="8.25" y="1.25" width="4.5" height="4.5"/><rect x="1.25" y="8.25" width="4.5" height="4.5"/></g><g fill="#6a6a6a"><rect x="3" y="3" width="1" height="1"/><rect x="10" y="3" width="1" height="1"/><rect x="3" y="10" width="1" height="1"/><path d="M7.5 7.5h1.6v6h-1.6zM9 8l3 3.5v-4h1.5v6h-1.5l-3-3.5z"/></g></svg>
<div class="td" style="left:273.0px;top:247.7px;color:#3b8a3b">在用</div>
<div class="td" style="left:347.0px;top:247.7px">压路机</div>
<div class="td lnk nm" style="left:489.0px;top:247.7px">YLJ0120ZHHCC0012</div>
<div class="td lnk nm" style="left:629.0px;top:247.7px">中文文化2</div>
<div class="td" style="left:742.5px;top:247.7px;color:#d63c34">A类</div>
<div class="td" style="left:808.5px;top:247.7px">管理部</div>
<div class="td nm" style="left:875.0px;top:247.7px">235</div>
<div class="td nm" style="left:969.0px;top:247.7px">235</div>
<div class="abs" style="left:0;top:269.5px;width:1021px;height:26.2px;background:#f9f8f7;border-bottom:1px solid #e4e4e4"></div>
<div class="td num" style="left:0;width:39px;top:273.9px">10</div>
<div class="cbr" style="left:51.0px;top:275.1px"></div>
<div class="plus" style="left:92.5px;top:277.6px"></div>
<div class="td lnk" style="left:122.5px;top:273.9px">NFC写入</div>
<svg class="abs" style="left:209.0px;top:275.6px" width="14" height="14" viewBox="0 0 14 14"><g fill="none" stroke="#6a6a6a" stroke-width="1.5"><rect x="1.25" y="1.25" width="4.5" height="4.5"/><rect x="8.25" y="1.25" width="4.5" height="4.5"/><rect x="1.25" y="8.25" width="4.5" height="4.5"/></g><g fill="#6a6a6a"><rect x="3" y="3" width="1" height="1"/><rect x="10" y="3" width="1" height="1"/><rect x="3" y="10" width="1" height="1"/><path d="M7.5 7.5h1.6v6h-1.6zM9 8l3 3.5v-4h1.5v6h-1.5l-3-3.5z"/></g></svg>
<div class="td" style="left:273.0px;top:273.9px;color:#555">报废</div>
<div class="td" style="left:347.0px;top:273.9px">路面养护车</div>
<div class="td lnk nm" style="left:489.0px;top:273.9px">LMYHC0120ZHHCC001</div>
<div class="td lnk nm" style="left:629.0px;top:273.9px">9794164684</div>
<div class="td" style="left:742.5px;top:273.9px;color:#f0ae48">B类</div>
<div class="td" style="left:808.5px;top:273.9px">管理部</div>
<div class="td nm" style="left:875.0px;top:273.9px">124</div>
<div class="td nm" style="left:969.0px;top:273.9px">214</div>
<div class="abs" style="left:0;top:295.7px;width:1021px;height:26.2px;background:#fff;border-bottom:1px solid #e4e4e4"></div>
<div class="td num" style="left:0;width:39px;top:300.1px">11</div>
<div class="cbr" style="left:51.0px;top:301.3px"></div>
<div class="abs" style="left:38.0px;top:0;width:1px;height:298.7px;background:#e2e2e2"></div>
<div class="abs" style="left:77.5px;top:0;width:1px;height:298.7px;background:#e2e2e2"></div>
<div class="abs" style="left:116.5px;top:0;width:1px;height:298.7px;background:#e2e2e2"></div>
<div class="abs" style="left:201.5px;top:0;width:1px;height:298.7px;background:#e2e2e2"></div>
<div class="abs" style="left:268.0px;top:0;width:1px;height:298.7px;background:#e2e2e2"></div>
<div class="abs" style="left:343.0px;top:0;width:1px;height:298.7px;background:#e2e2e2"></div>
<div class="abs" style="left:483.5px;top:0;width:1px;height:298.7px;background:#e2e2e2"></div>
<div class="abs" style="left:623.5px;top:0;width:1px;height:298.7px;background:#e2e2e2"></div>
<div class="abs" style="left:737.0px;top:0;width:1px;height:298.7px;background:#e2e2e2"></div>
<div class="abs" style="left:804.0px;top:0;width:1px;height:298.7px;background:#e2e2e2"></div>
<div class="abs" style="left:869.5px;top:0;width:1px;height:298.7px;background:#e2e2e2"></div>
<div class="abs" style="left:965.0px;top:0;width:1px;height:298.7px;background:#e2e2e2"></div>
<div class="abs" style="left:78.0px;top:298.7px;width:1000px;height:20px;background:#fff"></div>
<div class="abs" style="left:78.0px;top:298.9px;width:680.2px;height:11.5px;background:#c9c7c2"></div>
<div class="abs" style="left:1028.0px;top:0;width:1px;height:32.7px;background:#d8dfe6"></div><div class="abs" style="left:1029.0px;top:0;width:5px;height:32.7px;background:#e8eef4"></div>
<div class="abs" style="left:1020.0px;top:33.7px;width:13px;height:265.0px;background:#fff"></div>
<div class="abs" style="left:1020.0px;top:33.7px;width:13px;height:178.5px;background:#c9c7c2"></div>
</div>
<div class="pb" style="left:0.6px;top:436.0px;width:46.0px;color:#c4c4c4;background:#fff">首页</div>
<div class="pb" style="left:54.3px;top:436.0px;width:60.0px;color:#c4c4c4;background:#fff">上一页</div>
<div class="pb" style="left:122.2px;top:436.0px;width:59.5px;color:#444;background:#fff">下一页</div>
<div class="lbl" style="left:193.6px;top:442.0px;color:#555">到第</div>
<div class="abs" style="left:225.3px;top:436.0px;width:55px;height:30px;border:1px solid #ddd;background:#fff"><span class="abs" style="left:7px;top:6px;font-size:14px;color:#333">2</span><svg class="abs" style="left:37px;top:5px" width="9" height="20"><path d="M1 5L4.5 1L8 5z" fill="#333"/><path d="M1 14L4.5 18L8 14z" fill="#333"/></svg></div>
<div class="lbl" style="left:284.0px;top:442.0px;color:#555">页</div>
<div class="pb" style="left:301.6px;top:436.0px;width:50px;color:#333;background:#efefef;border-color:#efefef">确定</div>
<div class="lbl" style="left:360.7px;top:442.0px;color:#555">每页</div>
<div class="abs" style="left:391.5px;top:436.0px;width:76px;height:30px;border:1px solid #ddd;background:#fff"><span class="abs" style="left:7px;top:7px;font-size:14px;color:#333">15</span><div class="car" style="left:52px;top:12px;border-top-color:#333"></div></div>
<div class="lbl" style="left:471.0px;top:442.0px;color:#555">条&nbsp; 1/7页，共101条</div>
<!--/pg-->
</div>
</body></html>
